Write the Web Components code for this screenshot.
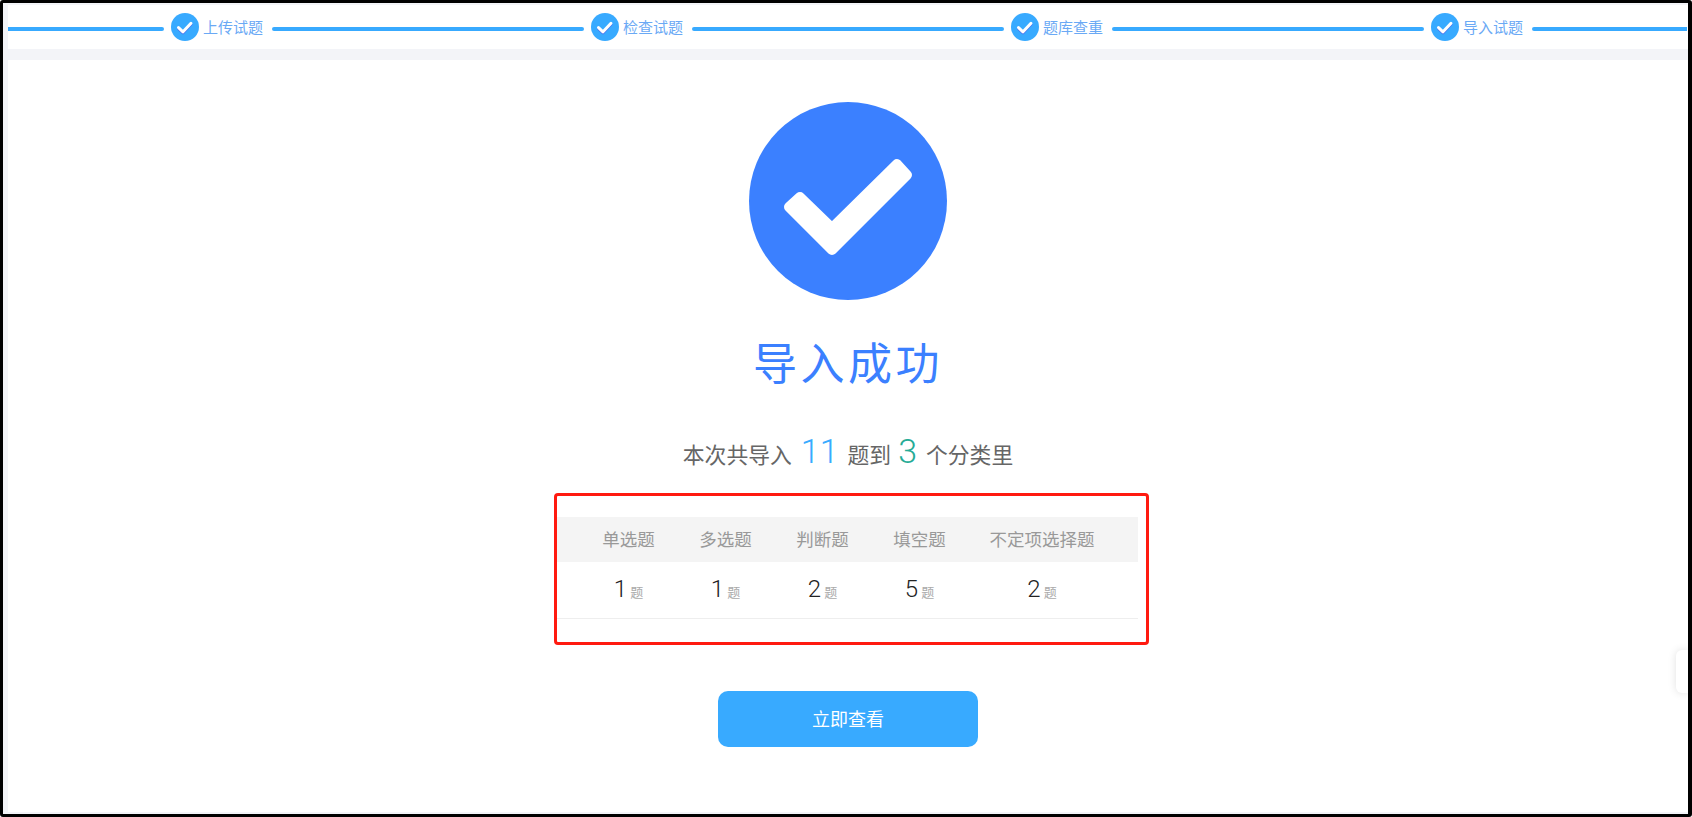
<!DOCTYPE html>
<html lang="zh-CN">
<head>
<meta charset="utf-8">
<title>导入成功</title>
<style>
html,body{margin:0;padding:0;background:#fff;}
body{font-family:"Noto Sans CJK SC","Liberation Sans",sans-serif;}
</style>
</head>
<body>
<template id="t-frame">
<style>
:host{display:flex;flex-direction:column;box-sizing:border-box;width:1692px;height:817px;border:solid #000;border-width:3px 4px 3px 3px;border-radius:3px;background:#f3f4f8;padding:2px 0 2px 5px;overflow:hidden;position:relative;}
</style>
<slot></slot>
</template>

<template id="t-bar">
<style>
:host{display:flex;flex:none;align-items:center;box-sizing:border-box;height:44px;padding:4px 0 0 0;background:#fff;}
</style>
<slot></slot>
</template>

<template id="t-line">
<style>
:host{display:block;height:4px;border-radius:2px;background:#38aaff;min-width:0;}
:host([span="1"]){flex:1 1 0;border-radius:0 2px 2px 0;}
:host([span="2"]){flex:2 1 0;}
:host([span="e"]){flex:1 1 0;border-radius:2px 0 0 2px;background:linear-gradient(90deg,#38aaff calc(100% - 1px),transparent 0);}
</style>
</template>

<template id="t-step">
<style>
:host{display:flex;flex:none;align-items:center;width:108px;box-sizing:border-box;padding:0 8px 0 7px;margin-bottom:5px;gap:4px;font:15px/20px "Noto Sans CJK SC","Liberation Sans",sans-serif;color:#6aa9f5;white-space:nowrap;}
svg{width:28px;height:28px;flex:none;display:block;}
</style>
<svg viewBox="0 0 28 28" aria-hidden="true">
<circle cx="14" cy="14" r="14" fill="#38aaff"/>
<path d="M7.5 15.6 12 19.8 20 11.3" fill="none" stroke="#4b72ee" stroke-width="3" stroke-linecap="round" stroke-linejoin="round"/>
<path d="M7.5 14.6 12 18.8 20 10.3" fill="none" stroke="#fff" stroke-width="3" stroke-linecap="round" stroke-linejoin="round"/>
</svg>
<span><slot></slot></span>
</template>

<template id="t-panel">
<style>
:host{display:flex;flex:1 1 auto;flex-direction:column;align-items:center;background:#fff;margin-top:11px;padding-top:42px;min-height:0;}
</style>
<slot></slot>
</template>

<template id="t-badge">
<style>
:host{display:block;width:198px;height:198px;flex:none;}
svg{display:block;width:198px;height:198px;}
</style>
<svg viewBox="0 0 198 198" aria-hidden="true">
<circle cx="99" cy="99" r="99" fill="#3b80ff"/>
<polygon points="40,105 51,95 83,126 148,62 158,73 83,148" fill="#fff" stroke="#fff" stroke-width="10" stroke-linejoin="round"/>
</svg>
</template>

<template id="t-title">
<style>
:host{display:block;flex:none;margin-top:31px;height:60px;font:400 44px/60px "Noto Sans CJK SC","Liberation Sans",sans-serif;letter-spacing:3.5px;color:#3b80ff;white-space:nowrap;}
</style>
<slot></slot>
</template>

<template id="t-summary">
<style>
:host{display:flex;flex:none;align-items:baseline;margin-top:35px;height:50px;font:21.8px/50px "Noto Sans CJK SC","Liberation Sans",sans-serif;color:#666;white-space:nowrap;}
::slotted(b){font:300 34px/50px Roboto,"Liberation Sans",sans-serif;}
</style>
<slot></slot>
</template>

<template id="t-red">
<style>
:host{display:block;flex:none;box-sizing:border-box;margin:17px 0 0 7px;width:595px;height:152px;border:3px solid #ff1a10;border-radius:4px;padding:21px 8px 0 0;}
</style>
<slot></slot>
</template>

<template id="t-table-row">
<style>
:host{display:grid;grid-template-columns:repeat(4,97px) 148px;padding:0 22px 0 23px;text-align:center;}
:host([kind="head"]){height:45px;background:#f4f4f4;font:17.5px/43px "Noto Sans CJK SC","Liberation Sans",sans-serif;color:#999;}
:host([kind="body"]){height:56px;border-bottom:1px solid #eee;}
</style>
<slot></slot>
</template>

<template id="t-stat">
<style>
:host{display:flex;align-items:baseline;justify-content:center;line-height:54px;color:#222;}
.n{font:300 24px/54px Roboto,"Liberation Sans",sans-serif;}
.u{font:13px/54px "Noto Sans CJK SC",sans-serif;color:#aaa;margin-left:3px;}
</style>
<span class="n"><slot></slot></span><span class="u">题</span>
</template>

<template id="t-btn">
<style>
:host{display:flex;flex:none;align-items:center;justify-content:center;box-sizing:border-box;margin-top:46px;width:260px;height:56px;padding-bottom:2px;border-radius:10px;background:#38aaff;color:#fff;font:400 18px/54px "Noto Sans CJK SC","Liberation Sans",sans-serif;cursor:pointer;}
</style>
<slot></slot>
</template>

<template id="t-handle">
<style>
:host{position:absolute;right:0;top:647px;width:12px;height:43px;background:#fff;border-radius:6px 0 0 6px;box-shadow:0 0 8px rgba(0,0,0,.12);}
</style>
</template>

<app-frame>
  <step-bar>
    <step-line span="1"></step-line>
    <step-item>上传试题</step-item>
    <step-line span="2"></step-line>
    <step-item>检查试题</step-item>
    <step-line span="2"></step-line>
    <step-item>题库查重</step-item>
    <step-line span="2"></step-line>
    <step-item>导入试题</step-item>
    <step-line span="e"></step-line>
  </step-bar>
  <result-panel>
    <success-badge></success-badge>
    <result-title>导入成功</result-title>
    <result-summary>本次共导入<b style="color:#38aaff;margin:0 9px 0 9px">11</b>题到<b style="color:#26ab96;margin:0 9px 0 7px">3</b>个分类里</result-summary>
    <highlight-box>
      <table-row kind="head"><span>单选题</span><span>多选题</span><span>判断题</span><span>填空题</span><span>不定项选择题</span></table-row>
      <table-row kind="body"><stat-cell>1</stat-cell><stat-cell>1</stat-cell><stat-cell>2</stat-cell><stat-cell>5</stat-cell><stat-cell>2</stat-cell></table-row>
    </highlight-box>
    <action-button>立即查看</action-button>
  </result-panel>
  <side-handle></side-handle>
</app-frame>

<script>
const map={
  'app-frame':'t-frame','step-bar':'t-bar','step-line':'t-line','step-item':'t-step',
  'result-panel':'t-panel','success-badge':'t-badge','result-title':'t-title',
  'result-summary':'t-summary','highlight-box':'t-red','table-row':'t-table-row',
  'stat-cell':'t-stat','action-button':'t-btn','side-handle':'t-handle'
};
for(const [tag,id] of Object.entries(map)){
  customElements.define(tag,class extends HTMLElement{
    constructor(){
      super();
      this.attachShadow({mode:'open'}).appendChild(document.getElementById(id).content.cloneNode(true));
    }
  });
}
</script>
</body>
</html>
